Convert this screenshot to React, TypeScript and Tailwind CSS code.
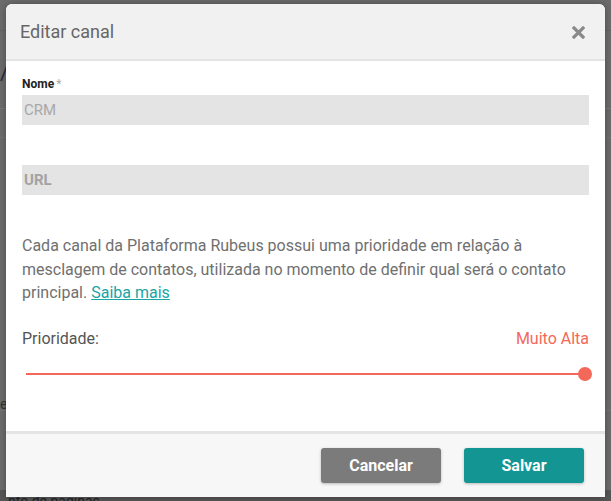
import React from "react";

export default function App() {
  return (
    <div
      className="relative h-[501px] w-[611px] overflow-hidden bg-[#6b6b6b]"
      style={{ fontFamily: "Roboto, 'Liberation Sans', sans-serif" }}
    >
      {/* faint background page fragments */}
      <div className="absolute left-0 top-[30px] h-px w-full bg-[#626262]" />
      <div className="absolute left-0 top-[108px] h-px w-full bg-[#777]" />
      <div className="absolute left-0 top-[137px] h-px w-full bg-[#737373]" />
      <div className="absolute left-0 top-[410px] h-px w-full bg-[#737373]" />
      <div className="absolute left-0 top-[490px] h-[11px] w-full bg-[#555]" />
      <div className="absolute left-0 top-[62px] text-[22px] leading-none text-[#2a2a3a]">/</div>
      <div className="absolute left-0 top-[397px] text-[14px] leading-none text-[#333]">e</div>
      <div className="absolute left-[8px] top-[494px] text-[14px] leading-none text-[#222]">nto de páginas</div>

      <div className="relative ml-[6px] mt-[4px] flex h-[493px] w-[599px] flex-col overflow-hidden rounded-t-[6px] bg-white shadow-[0_0_6px_rgba(0,0,0,0.3)]">
        {/* header */}
        <div className="flex h-[57px] items-center justify-between border-b-[2px] border-[#e3e3e3] bg-[#f1f1f1] pl-[14px] pr-[20px]">
          <span className="text-[18px] text-[#666]">Editar canal</span>
          <svg width="13" height="13" viewBox="0 0 13 13" className="mt-[2px]">
            <path d="M2 2 L11 11 M11 2 L2 11" stroke="#8a8a8a" strokeWidth="3.2" strokeLinecap="square" />
          </svg>
        </div>

        {/* body */}
        <div className="flex flex-1 flex-col px-[16px]">
          <div className="mt-[16px] text-[12px] font-bold leading-[14px] text-[#222]">
            Nome<span className="ml-[2px] font-normal text-[#aaa]">*</span>
          </div>
          <div className="mt-[4px] flex h-[30px] items-center bg-[#e4e4e4] px-[2px] text-[15px] text-[#a8a8a8]">
            CRM
          </div>
          <div className="mt-[40px] flex h-[30px] items-center bg-[#e4e4e4] px-[2px] text-[15px] font-bold text-[#a3a3a3]">
            URL
          </div>
          <p className="mt-[39px] text-[16px] leading-[23.5px] text-[#707070]">
            Cada canal da Plataforma Rubeus possui uma prioridade em relação à mesclagem de contatos, utilizada no
            momento de definir qual será o contato principal.{" "}
            <a className="text-[#1aa5a5] underline">Saiba mais</a>
          </p>
          <div className="mt-[24px] flex items-center justify-between text-[16px] leading-[20px]">
            <span className="text-[#555]">Prioridade:</span>
            <span className="text-[#f4685a]">Muito Alta</span>
          </div>
          <div className="relative mx-[4px] mt-[18px] flex h-[14px] items-center">
            <div className="h-[2px] flex-1 bg-[#f4685a]" />
            <div className="absolute right-[-7px] top-0 h-[14px] w-[14px] rounded-full bg-[#f4685a]" />
          </div>
        </div>

        {/* footer */}
        <div className="flex h-[66px] items-center justify-end gap-[23px] border-t-[3px] border-[#e4e4e4] bg-[#f7f7f7] pr-[21px]">
          <button className="flex h-[35px] w-[120px] items-center justify-center rounded-[3px] bg-[#7b7b7b] text-[16px] font-bold text-white shadow-[0_1px_3px_rgba(0,0,0,0.25)]">
            Cancelar
          </button>
          <button className="flex h-[35px] w-[120px] items-center justify-center rounded-[3px] bg-[#139693] text-[16px] font-bold text-white shadow-[0_1px_3px_rgba(0,0,0,0.25)]">
            Salvar
          </button>
        </div>
      </div>
    </div>
  );
}
